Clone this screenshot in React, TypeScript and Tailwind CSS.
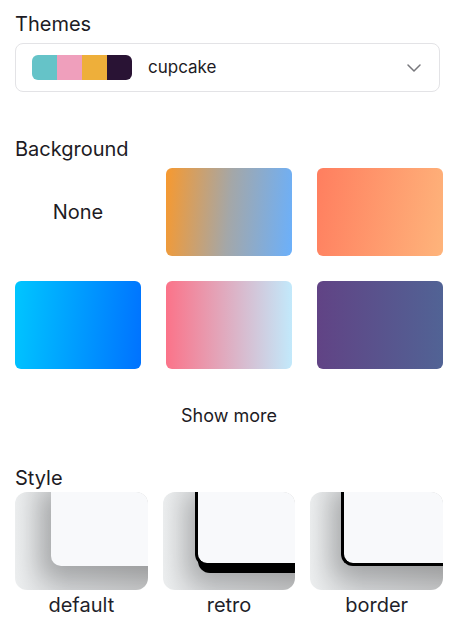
import { ChevronDown } from 'lucide-react';

const backgrounds = [
  'bg-[linear-gradient(95deg,#f7992f,#a4a7a8_50%,#6bb0fb)]',
  'bg-[linear-gradient(100deg,#ff7e5f,#feb47b)]',
  'bg-[linear-gradient(95deg,#00c6ff,#0072ff)]',
  'bg-[linear-gradient(90deg,#fb7389,#c2e9fb)]',
  'bg-[linear-gradient(90deg,#614385,#516395)]',
];

type CardStyle = 'default' | 'retro' | 'border';

function StylePreview({ kind }: { kind: CardStyle }) {
  const inner =
    kind === 'default'
      ? 'left-[36px] bottom-[39px] rounded-bl-[10px] shadow-[-12px_14px_26px_rgba(0,0,0,0.24)]'
      : kind === 'retro'
        ? 'left-[32px] bottom-[35px] rounded-bl-[12px] border-l-[3px] border-b-[3px] border-black shadow-[3px_7px_0_#000,-10px_18px_26px_rgba(0,0,0,0.22)]'
        : 'left-[31px] bottom-[33px] rounded-bl-[12px] border-l-[3px] border-b-[3px] border-black shadow-[-10px_14px_26px_rgba(0,0,0,0.24)]';
  return (
    <div className="flex flex-col items-center">
      <div className="relative h-[98px] w-full overflow-hidden rounded-xl bg-[linear-gradient(90deg,#eceeef,#d6d8da_40%,#cacbcc)]">
        <div className={`absolute -top-4 -right-4 h-[90px] w-[140px] bg-[#f8f9fb] ${inner}`} />
      </div>
      <span className="mt-[3px] text-[20px] leading-6 text-[#1f1f2a]">{kind}</span>
    </div>
  );
}

export default function App() {
  return (
    <div className="h-[626px] w-[458px] bg-white px-[15px] pt-[12px] font-['Inter','Noto_Sans',sans-serif] text-[#1d1b24]">
      <h3 className="text-[20px] leading-6">Themes</h3>
      <button className="mt-[7px] flex h-[49px] w-[425px] items-center rounded-lg border border-[#e3e3e6] pl-4 pr-[13px]">
        <div className="flex h-[25px] w-[100px] overflow-hidden rounded-md">
          <div className="flex-1 bg-[#65c3c8]" />
          <div className="flex-1 bg-[#ef9fbc]" />
          <div className="flex-1 bg-[#eeaf3a]" />
          <div className="flex-1 bg-[#291334]" />
        </div>
        <span className="ml-4 text-[17px]">cupcake</span>
        <ChevronDown className="ml-auto h-6 w-6 text-[#77777c]" strokeWidth={1.5} />
      </button>

      <h3 className="mt-[45px] text-[20px] leading-6">Background</h3>
      <div className="mt-[7px] grid grid-cols-3 gap-x-[25px] gap-y-[25px]">
        <div className="flex h-[88px] items-center justify-center text-[20px]">None</div>
        {backgrounds.map((bg) => (
          <div key={bg} className={`h-[88px] rounded-md ${bg}`} />
        ))}
      </div>

      <div className="mt-[34px] flex justify-center">
        <button className="text-[18px] leading-[26px]">Show more</button>
      </div>

      <h3 className="mt-[37px] text-[20px] leading-6">Style</h3>
      <div className="mt-[2px] grid grid-cols-3 gap-[15px]">
        <StylePreview kind="default" />
        <StylePreview kind="retro" />
        <StylePreview kind="border" />
      </div>
    </div>
  );
}
